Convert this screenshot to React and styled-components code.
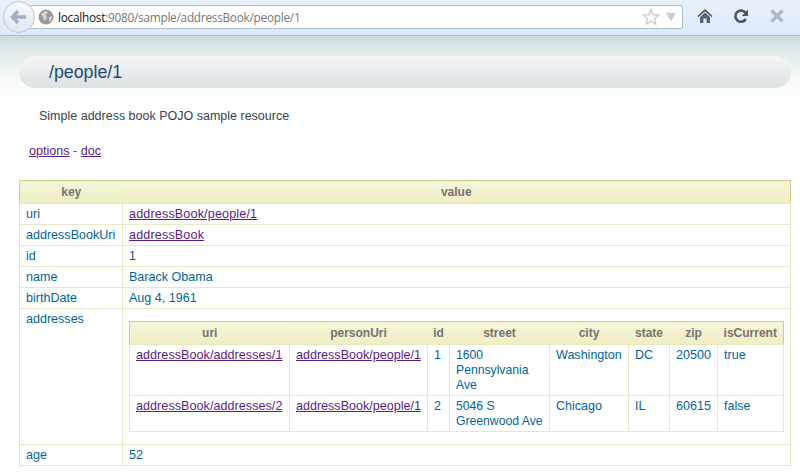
import React from "react";
import styled, { createGlobalStyle } from "styled-components";

const Global = createGlobalStyle`
  html, body { margin: 0; padding: 0; background: #fff; overflow: hidden; }
  body { font-family: "Liberation Sans", Arial, sans-serif; font-size: 12px; line-height: 15px; color: #333; }
`;
const Page = styled.div`width: 800px; height: 475px; overflow: hidden; display: flex; flex-direction: column;`;
const Toolbar = styled.header`
  flex: none; height: 35px; box-sizing: content-box; display: flex; align-items: flex-start; padding-left: 3px;
  background: linear-gradient(#e9f1fb, #deeafa); border-bottom: 1px solid #a9bdd3;
`;
const BackButton = styled.div`
  position: relative; z-index: 1; flex: none; width: 30px; height: 30px; margin-top: 1px; margin-right: -5px; border-radius: 50%;
  border: 1px solid #b9c6d8; background: linear-gradient(#f7f9fc, #dfe7f1); display: flex; align-items: center; justify-content: center;
  box-sizing: content-box;
`;
const UrlField = styled.div`
  flex: none; width: 644px; height: 22px; margin-top: 5px; border: 1px solid #aebed1; border-radius: 0 2px 2px 0; background: #fff;
  display: flex; align-items: center; padding-left: 7px; box-sizing: content-box;
  font-family: "Open Sans", sans-serif; font-size: 11.8px; color: #777; letter-spacing: -0.25px;
`;
const Globe = styled.svg`flex: none; margin-right: 4px;`;
const Host = styled.span`color: #111;`;
const UrlSpacer = styled.span`flex: 1;`;
const UrlIcons = styled.div`display: flex; align-items: center; gap: 6px; padding-right: 6px;`;
const NavIcons = styled.div`display: flex; align-items: center; gap: 20px; margin-top: 8px; margin-left: 14px;`;
const Content = styled.main`
  flex: 1; padding: 20px 9px 0 19px;
  background: linear-gradient(#cbdada 0, #dfe8e8 14px, #f6f8f8 40px, #fff 66px) no-repeat;
`;
const TitleBar = styled.div`
  height: 32px; border-radius: 16px; background: linear-gradient(#f5f5f5, #dde1e5);
  display: flex; align-items: center; padding-left: 30px; font-size: 17.8px; color: #1c4a78;
`;
const Description = styled.p`margin: 21px 0 0 20px; color: #36454f; font-size: 12.5px; line-height: 15px;`;
const Links = styled.p`margin: 20px 0 0 10px; color: #555; line-height: 15px; font-size: 12.6px;`;
const Link = styled.a`color: #5a1a8e; text-decoration: underline; white-space: nowrap; letter-spacing: ${p => p.$spacing || 0}px;`;
const Grid = styled.table`
  border-collapse: collapse; table-layout: fixed; width: ${p => p.$width}px; margin-top: ${p => p.$top || 0}px;
  font-size: 12.55px; line-height: 15px; color: #00659c;
`;
const Head = styled.th`
  height: 23px; padding: 0; box-sizing: border-box; font-weight: bold; font-size: 12px; color: #747474; text-align: center;
  background: linear-gradient(#f7f5da, #f0edc2);
  border-top: 1px solid #cfcc8f; border-bottom: 1px solid #e6e6c0;
  &:first-child { border-left: 1px solid #cfcc8f; }
  &:last-child { border-right: 1px solid #cfcc8f; }
`;
const Cell = styled.td`
  border: 1px solid #e8e8c8; padding: 3px 4px 2px 6px; vertical-align: top; word-wrap: break-word;
`;
const StreetCell = styled(Cell)`padding-right: 0; font-size: 12.2px;`;
const NestedCell = styled(Cell)`padding: 12px 6px 12px 6px;`;

const people = [
  { k: "uri", v: <Link href="#" $spacing={0.17}>addressBook/people/1</Link> },
  { k: "addressBookUri", v: <Link href="#" $spacing={0.17}>addressBook</Link> },
  { k: "id", v: "1" },
  { k: "name", v: "Barack Obama" },
  { k: "birthDate", v: "Aug 4, 1961" },
];
const columns = [
  ["uri", 160], ["personUri", 138], ["id", 22], ["street", 100], ["city", 79], ["state", 41], ["zip", 48], ["isCurrent", 66],
];
const rows = [
  { uri: "addressBook/addresses/1", id: "1", street: "1600 Pennsylvania Ave", city: "Washington", state: "DC", zip: "20500", cur: "true" },
  { uri: "addressBook/addresses/2", id: "2", street: "5046 S Greenwood Ave", city: "Chicago", state: "IL", zip: "60615", cur: "false" },
];

export default function App() {
  return (
    <Page>
      <Global />
      <Toolbar>
        <BackButton>
          <svg width="20" height="18" viewBox="0 0 20 18" fill="none">
            <path d="M9 3 L3.5 9 L9 15 M4 9 H17" stroke="#9fb0c4" strokeWidth="3.4" />
          </svg>
        </BackButton>
        <UrlField>
          <Globe width="16" height="16" viewBox="0 0 16 16">
            <circle cx="8" cy="8" r="7.5" fill="#9a9a9a" />
            <path d="M3 5 L7 2 L10 3 L8 6 L9 9 L6 12 L5 8 Z M11 8 L14 7 L13 12 L11 13 Z" fill="#d4d4d4" />
          </Globe>
          <span><Host>localhost</Host>:9080/sample/addressBook/people/1</span>
          <UrlSpacer />
          <UrlIcons>
            <svg width="18" height="18" viewBox="0 0 18 18">
              <path d="M9 1.5 L11.2 6.6 L16.7 7.1 L12.5 10.7 L13.8 16.2 L9 13.3 L4.2 16.2 L5.5 10.7 L1.3 7.1 L6.8 6.6 Z" fill="#fbfbfb" stroke="#c9c9c9" strokeWidth="1.2" />
            </svg>
            <svg width="10" height="8" viewBox="0 0 10 8"><path d="M0 0 H10 L5 8 Z" fill="#c5cedb" /></svg>
          </UrlIcons>
        </UrlField>
        <NavIcons>
          <svg width="16" height="16" viewBox="0 0 16 16">
            <path d="M0.5 8 L8 1 L15.5 8 L14.5 9 L8 3.2 L1.5 9 Z" fill="#3f5266" />
            <path d="M3 9 L8 4.6 L13 9 V15 H9.6 V10.5 H6.4 V15 H3 Z" fill="#51667a" />
          </svg>
          <svg width="16" height="16" viewBox="0 0 16 16" fill="none">
            <path d="M12.6 5 A5.6 5.6 0 1 0 12.8 11" stroke="#49596a" strokeWidth="2.7" />
            <path d="M15 1.5 V8 H8.7 Z" fill="#49596a" />
          </svg>
          <svg width="16" height="16" viewBox="0 0 16 16" fill="none">
            <path d="M2.5 2.5 L13.5 13.5 M13.5 2.5 L2.5 13.5" stroke="#adb9c6" strokeWidth="3.4" />
          </svg>
        </NavIcons>
      </Toolbar>
      <Content>
        <TitleBar>/people/1</TitleBar>
        <Description>Simple address book POJO sample resource</Description>
        <Links><Link href="#">options</Link> - <Link href="#">doc</Link></Links>
        <Grid $width={771} $top={21}>
          <colgroup><col width="103" /><col width="668" /></colgroup>
          <thead><tr><Head>key</Head><Head>value</Head></tr></thead>
          <tbody>
            {people.map(r => <tr key={r.k}><Cell>{r.k}</Cell><Cell>{r.v}</Cell></tr>)}
            <tr>
              <Cell>addresses</Cell>
              <NestedCell>
                <Grid $width={654}>
                  <colgroup>{columns.map(([n, w]) => <col key={n} width={w} />)}</colgroup>
                  <thead><tr>{columns.map(([n]) => <Head key={n}>{n}</Head>)}</tr></thead>
                  <tbody>
                    {rows.map(r => (
                      <tr key={r.uri}>
                        <Cell><Link href="#" $spacing={0.06}>{r.uri}</Link></Cell>
                        <Cell><Link href="#">addressBook/people/1</Link></Cell>
                        <Cell>{r.id}</Cell>
                        <StreetCell>{r.street}</StreetCell>
                        <Cell>{r.city}</Cell>
                        <Cell>{r.state}</Cell>
                        <Cell>{r.zip}</Cell>
                        <Cell>{r.cur}</Cell>
                      </tr>
                    ))}
                  </tbody>
                </Grid>
              </NestedCell>
            </tr>
            <tr><Cell>age</Cell><Cell>52</Cell></tr>
          </tbody>
        </Grid>
      </Content>
    </Page>
  );
}
